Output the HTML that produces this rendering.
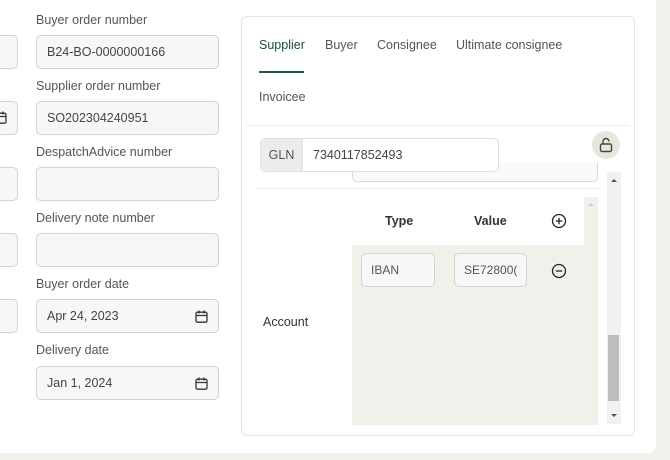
<!DOCTYPE html>
<html><head><style>
*{box-sizing:border-box;margin:0;padding:0}
body{width:670px;height:460px;background:#f1f1ec;font-family:"Liberation Sans",sans-serif;position:relative;overflow:hidden;color:#333}
.main{position:absolute;left:0;top:0;width:656px;height:453px;background:#fff;border-bottom-right-radius:8px}
.a{position:absolute}
.lbl{position:absolute;left:36px;font-size:12.5px;color:#555}
.inp{position:absolute;left:36px;width:183px;height:34px;background:#f7f7f7;border:1px solid #d3d3d3;border-radius:5px;font-size:12.5px;color:#444;padding:9px 10px;line-height:15px}
.pl{position:absolute;left:-10px;width:28px;height:34px;background:#f7f7f7;border:1px solid #d3d3d3;border-radius:5px}
.cal{position:absolute;right:10px;top:10px}
.tab{position:absolute;font-size:12.5px;color:#555}
</style></head><body>
<div class="main">
<div class="pl" style="top:35px"></div>
<div class="pl" style="top:101px"><svg class="a" style="left:8px;top:9px" width="10" height="13" viewBox="0 0 10 13"><rect x="-4" y="2.2" width="11" height="10" rx="1.5" fill="none" stroke="#333" stroke-width="1.3"/><path d="M-1 0.5v3M4 0.5v3M-4 5.5h11" stroke="#333" stroke-width="1.3"/></svg></div>
<div class="pl" style="top:167px"></div>
<div class="pl" style="top:233px"></div>
<div class="pl" style="top:299px"></div>

<div class="lbl" style="top:13px">Buyer order number</div>
<div class="inp" style="top:35px">B24-BO-0000000166</div>
<div class="lbl" style="top:79px">Supplier order number</div>
<div class="inp" style="top:101px">SO202304240951</div>
<div class="lbl" style="top:145px">DespatchAdvice number</div>
<div class="inp" style="top:167px"></div>
<div class="lbl" style="top:211px">Delivery note number</div>
<div class="inp" style="top:233px"></div>
<div class="lbl" style="top:277px">Buyer order date</div>
<div class="inp" style="top:299px">Apr 24, 2023<svg class="cal" width="13" height="13" viewBox="0 0 13 13"><rect x="1" y="2.2" width="11" height="10" rx="1.5" fill="none" stroke="#333" stroke-width="1.3"/><path d="M4 0.5v3M9 0.5v3M1 5.5h11" stroke="#333" stroke-width="1.3"/></svg></div>
<div class="lbl" style="top:343px">Delivery date</div>
<div class="inp" style="top:366px">Jan 1, 2024<svg class="cal" width="13" height="13" viewBox="0 0 13 13"><rect x="1" y="2.2" width="11" height="10" rx="1.5" fill="none" stroke="#333" stroke-width="1.3"/><path d="M4 0.5v3M9 0.5v3M1 5.5h11" stroke="#333" stroke-width="1.3"/></svg></div>

<div class="a" style="left:241px;top:16px;width:394px;height:420px;border:1px solid #e4e4e0;border-radius:6px;overflow:hidden">
 <div class="tab" style="left:17px;top:21px;color:#1e4d33">Supplier</div>
 <div class="tab" style="left:83px;top:21px">Buyer</div>
 <div class="tab" style="left:135px;top:21px">Consignee</div>
 <div class="tab" style="left:214px;top:21px">Ultimate consignee</div>
 <div class="a" style="left:17px;top:54px;width:45px;height:2px;background:#1f5a3a"></div>
 <div class="tab" style="left:17px;top:73px">Invoicee</div>
 <div class="a" style="left:5px;top:108px;width:383px;height:1px;background:#ececec"></div>

 <div class="a" style="left:110px;top:145px;width:246px;height:20px;border:1px solid #d8d8d8;border-top:none;border-radius:0 0 5px 5px;background:#fafafa"></div>
 <div class="a" style="left:13px;top:171px;width:346px;height:1px;background:#ececec"></div>
 <div class="a" style="left:18px;top:121px;width:239px;height:34px;border:1px solid #e0e0e0;border-radius:5px;background:#fff;font-size:12.5px">
  <div class="a" style="left:0;top:0;width:42px;height:32px;background:#ececec;border-right:1px solid #e0e0e0;border-radius:5px 0 0 5px;padding:9px 0;text-align:center;color:#555">GLN</div>
  <div class="a" style="left:52px;top:9px;color:#444">7340117852493</div>
 </div>
 <div class="a" style="left:350px;top:114px;width:28px;height:28px;border-radius:50%;background:#e6e6dc">
  <svg class="a" style="left:7px;top:6px" width="14" height="16" viewBox="0 0 14 16"><path d="M4 7V4.5a3 3 0 0 1 6 0" fill="none" stroke="#444" stroke-width="1.4"/><rect x="1.5" y="7" width="11" height="7.5" rx="1.5" fill="none" stroke="#444" stroke-width="1.4"/></svg>
 </div>

 <div class="a" style="left:365px;top:155px;width:14px;height:252px;background:#f1f1f1">
  <div class="a" style="left:1px;top:163px;width:11px;height:66px;background:#bdbdbd"></div>
  <div class="a" style="left:4px;top:7px;border:3px solid transparent;border-bottom:3px solid #555;border-top:0"></div>
  <div class="a" style="left:4px;top:242px;border:3px solid transparent;border-top:3px solid #555;border-bottom:0"></div>
 </div>

 <div class="a" style="left:110px;top:180px;width:246px;height:228px;background:#f1f1ec">
  <div class="a" style="left:0;top:0;width:232px;height:48px;background:#fff"></div>
  <div class="a" style="left:232px;top:0;width:14px;height:228px;background:#f1f1ec"></div>
  <div class="a" style="left:236px;top:6px;border:3px solid transparent;border-bottom:3px solid #ccc;border-top:0"></div>
  <div class="a" style="left:33px;top:17px;font-size:12.5px;font-weight:bold;color:#333">Type</div>
  <div class="a" style="left:122px;top:17px;font-size:12.5px;font-weight:bold;color:#333">Value</div>
  <svg class="a" style="left:199px;top:16px" width="16" height="16" viewBox="0 0 16 16"><circle cx="8" cy="8" r="6.5" fill="none" stroke="#222" stroke-width="1.3"/><path d="M8 4.8v6.4M4.8 8h6.4" stroke="#222" stroke-width="1.3"/></svg>
  <div class="a" style="left:9px;top:56px;width:74px;height:34px;background:#f7f7f7;border:1px solid #d5d5d5;border-radius:5px;font-size:12px;color:#555;padding:9px 9px">IBAN</div>
  <div class="a" style="left:102px;top:56px;width:73px;height:34px;background:#f7f7f7;border:1px solid #d5d5d5;border-radius:5px;font-size:12px;color:#555;padding:9px 9px;overflow:hidden;white-space:nowrap">SE72800(</div>
  <svg class="a" style="left:199px;top:66px" width="16" height="16" viewBox="0 0 16 16"><circle cx="8" cy="8" r="6.5" fill="none" stroke="#222" stroke-width="1.3"/><path d="M4.8 8h6.4" stroke="#222" stroke-width="1.3"/></svg>
 </div>
 <div class="a" style="left:21px;top:298px;font-size:12.5px;color:#333">Account</div>
</div>
</div>
</body></html>
